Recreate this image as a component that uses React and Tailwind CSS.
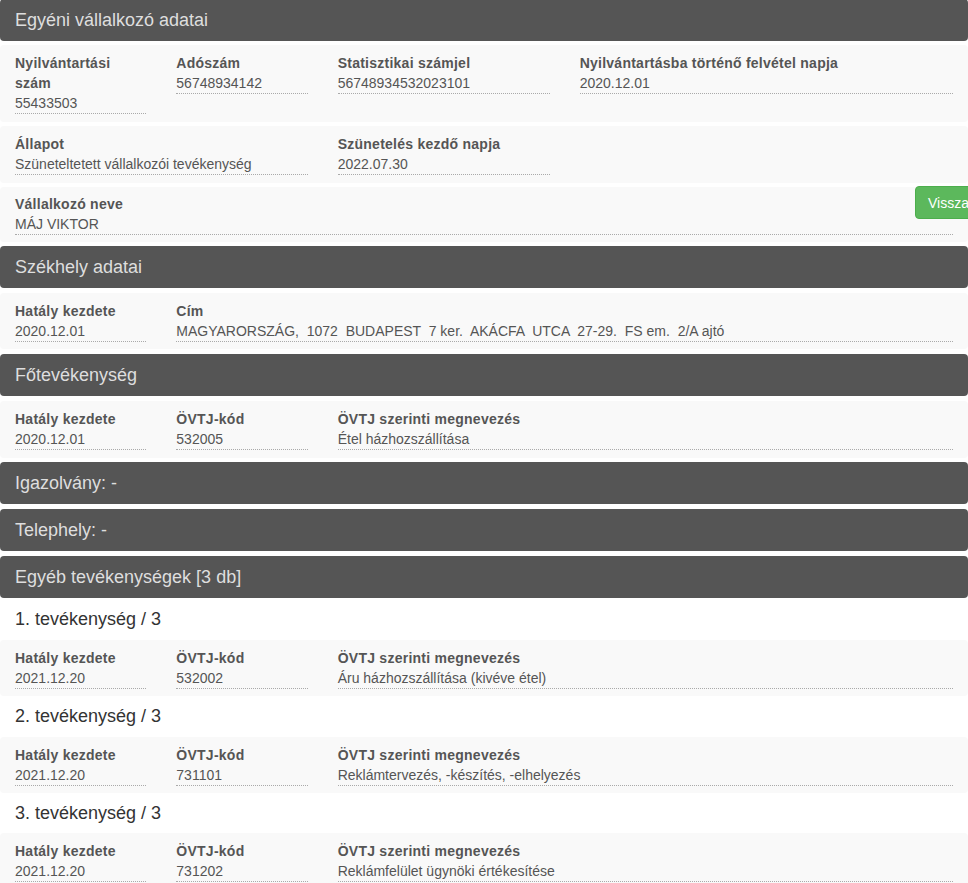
import React from "react";

// Dark section bar
function SectionHeader({ children, className = "" }) {
  return (
    <div
      className={`h-[42px] flex items-center px-[15px] bg-[#555555] text-[#dedede] text-[18px] leading-[20px] rounded-[4px] ${className}`}
    >
      {children}
    </div>
  );
}

// Label + dotted-underlined value, sized by a grid span
function Field({ label, value, span }) {
  return (
    <div className={`${span} px-[15px]`}>
      <div className="font-bold text-[#555] tracking-[0.25px]">{label}</div>
      <div className="border-b border-dotted border-[#aaa] text-[#555] whitespace-pre">{value}</div>
    </div>
  );
}

// Light grey data row with a 12-column grid
function DataRow({ children, className = "" }) {
  return (
    <div
      className={`relative grid grid-cols-12 items-start bg-[#f9f9f9] rounded-[4px] pt-[8px] ${className}`}
    >
      {children}
    </div>
  );
}

function Activity({ index, start, code, name, first }) {
  return (
    <>
      <h4
        className={`text-[18px] leading-[19.8px] text-[#333] px-[15px] mb-[10px] ${
          first ? "mt-[12px]" : "mt-[11px]"
        }`}
      >
        {index}. tevékenység / 3
      </h4>
      <DataRow className="pb-[7px]">
        <Field span="col-span-2" label="Hatály kezdete" value={start} />
        <Field span="col-span-2" label="ÖVTJ-kód" value={code} />
        <Field span="col-span-8" label="ÖVTJ szerinti megnevezés" value={name} />
      </DataRow>
    </>
  );
}

export default function App() {
  return (
    <div className="h-screen w-full overflow-hidden bg-white font-['Liberation_Sans',Arial,sans-serif] text-[14px] leading-[20px]">
      <div className="w-[968px]">
        <SectionHeader className="-mt-px mb-[4px]">Egyéni vállalkozó adatai</SectionHeader>

        <DataRow className="pb-[8px] mb-[4px]">
          <Field span="col-span-2" label="Nyilvántartási szám" value="55433503" />
          <Field span="col-span-2" label="Adószám" value="56748934142" />
          <Field span="col-span-3" label="Statisztikai számjel" value="56748934532023101" />
          <Field span="col-span-5" label="Nyilvántartásba történő felvétel napja" value="2020.12.01" />
        </DataRow>

        <DataRow className="pb-[8px] mb-[4px]">
          <Field span="col-span-4" label="Állapot" value="Szüneteltetett vállalkozói tevékenység" />
          <Field span="col-span-3" label="Szünetelés kezdő napja" value="2022.07.30" />
        </DataRow>

        <DataRow className="!pt-[7px] pb-[7px] mb-[4px]">
          <Field span="col-span-12" label="Vállalkozó neve" value="MÁJ VIKTOR" />
          <button className="absolute left-[915px] top-[-1px] h-[33px] px-[12px] bg-[#5cb85c] border border-[#4cae4c] rounded-[4px] text-white text-[14px] leading-[20px] whitespace-nowrap">
            Vissza
          </button>
        </DataRow>

        <SectionHeader className="mb-[5px]">Székhely adatai</SectionHeader>
        <DataRow className="pb-[7px] mb-[5px]">
          <Field span="col-span-2" label="Hatály kezdete" value="2020.12.01" />
          <Field
            span="col-span-10"
            label="Cím"
            value="MAGYARORSZÁG,  1072  BUDAPEST  7 ker.  AKÁCFA  UTCA  27-29.  FS em.  2/A ajtó"
          />
        </DataRow>

        <SectionHeader className="mb-[5px]">Főtevékenység</SectionHeader>
        <DataRow className="pb-[8px] mb-[4px]">
          <Field span="col-span-2" label="Hatály kezdete" value="2020.12.01" />
          <Field span="col-span-2" label="ÖVTJ-kód" value="532005" />
          <Field span="col-span-8" label="ÖVTJ szerinti megnevezés" value="Étel házhozszállítása" />
        </DataRow>

        <SectionHeader className="mb-[5px]">Igazolvány: -</SectionHeader>
        <SectionHeader className="mb-[5px]">Telephely: -</SectionHeader>
        <SectionHeader>Egyéb tevékenységek [3 db]</SectionHeader>

        <Activity
          first
          index={1}
          start="2021.12.20"
          code="532002"
          name="Áru házhozszállítása (kivéve étel)"
        />
        <Activity
          index={2}
          start="2021.12.20"
          code="731101"
          name="Reklámtervezés, -készítés, -elhelyezés"
        />
        <Activity
          index={3}
          start="2021.12.20"
          code="731202"
          name="Reklámfelület ügynöki értékesítése"
        />
      </div>
    </div>
  );
}
